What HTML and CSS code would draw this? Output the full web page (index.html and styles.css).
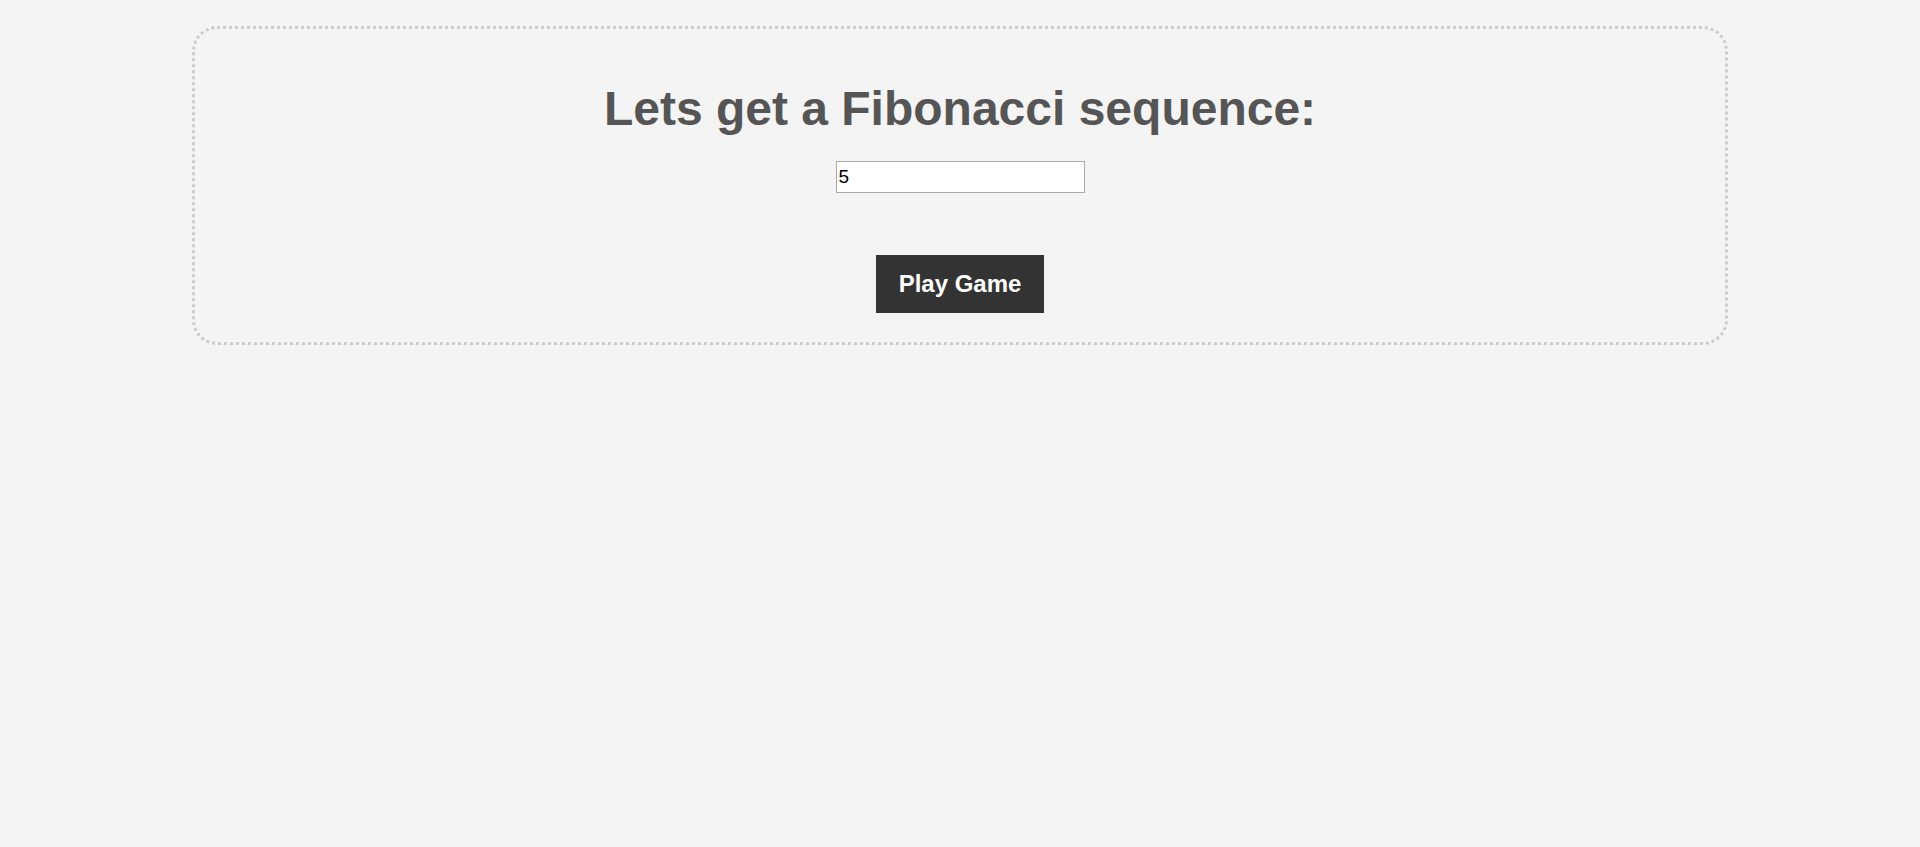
FILE: index.html
```html
<!DOCTYPE html>
<html lang="en">
<head>
<meta charset="utf-8">
<title>Fibonacci</title>
<link rel="stylesheet" href="styles.css">
</head>
<body>
<div class="card">
  <h1 class="title">Lets get a Fibonacci sequence:</h1>
  <input class="num" type="text" value="5">
  <button class="play" type="button">Play Game</button>
</div>
</body>
</html>
```
FILE: styles.css
```css
html, body {
  background: #f4f4f4;
}
body {
  margin: 0;
  padding-top: 26px;
  font-family: "Liberation Sans", Arial, sans-serif;
}
.card {
  box-sizing: border-box;
  width: 80%;
  margin: 0 auto;
  border: 3px dotted #cccccc;
  border-radius: 25px;
  padding: 52px 0 29px;
  display: flex;
  flex-direction: column;
  align-items: center;
}
.title {
  margin: 0;
  font-family: "Liberation Sans", Arial, sans-serif;
  font-weight: bold;
  font-size: 48px;
  line-height: 55px;
  color: #555555;
}
.num {
  box-sizing: border-box;
  margin: 25px 0 0;
  width: 249px;
  height: 32px;
  border: 1px solid #aaaaaa;
  padding: 0 2px;
  background: #ffffff;
  font-family: "Liberation Sans", Arial, sans-serif;
  font-size: 19px;
  color: #000000;
  outline: none;
}
.play {
  margin-top: 62px;
  width: 168px;
  height: 58px;
  border: 0;
  padding: 0;
  background: #333333;
  color: #ffffff;
  font-family: "Liberation Sans", Arial, sans-serif;
  font-weight: bold;
  font-size: 24px;
  cursor: pointer;
}
```
